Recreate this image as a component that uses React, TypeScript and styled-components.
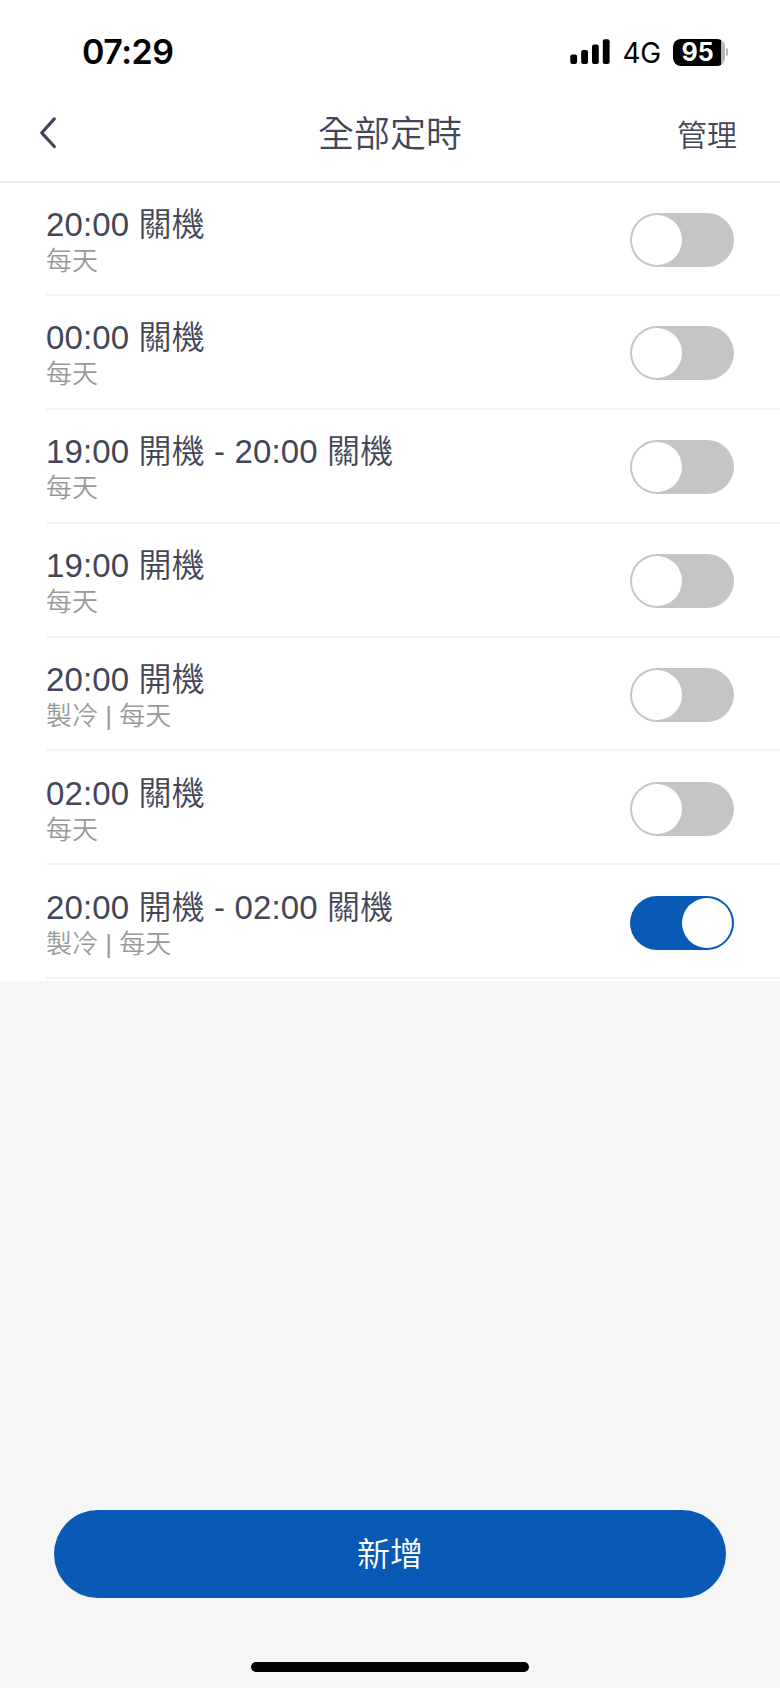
import React, { useState } from "react";
import styled, { createGlobalStyle } from "styled-components";

const Global = createGlobalStyle`
  * { box-sizing: border-box; }
  body { margin: 0; background: #f6f6f6; }
  button { border: 0; padding: 0; background: none; font: inherit; color: inherit; }
`;

const Screen = styled.div`
  display: flex;
  flex-direction: column;
  width: 780px;
  height: 1688px;
  background: #f6f6f6;
  color: #434658;
  font-family: "Liberation Sans", "Noto Sans CJK TC", sans-serif;
  font-weight: 350;
`;

const StatusBar = styled.div`
  display: flex;
  justify-content: space-between;
  align-items: center;
  height: 104px;
  padding: 0 52px 0 82px;
  background: #fff;
  color: #000;
  font-family: Inter, sans-serif;
`;

const Clock = styled.span`
  font-size: 34px;
  font-weight: 600;
  line-height: 40px;
  letter-spacing: -0.5px;
`;

const StatusIcons = styled.div`
  display: flex;
  align-items: center;
`;

const Network = styled.span`
  margin: 2px 12px 0 12px;
  font-size: 28px;
  font-weight: 400;
  line-height: 32px;
  letter-spacing: -0.2px;
`;

const Battery = styled.div`
  display: flex;
  align-items: center;
`;

const BatteryBody = styled.div`
  display: flex;
  align-items: center;
  justify-content: center;
  width: 52px;
  height: 27px;
  padding-right: 3px;
  border-radius: 8px;
  background: linear-gradient(to right, #000 48.5px, #b5b5b5 48.5px);
  color: #fff;
  font-size: 25px;
  font-weight: 700;
  line-height: 27px;
`;

const BatteryTip = styled.div`
  width: 2px;
  height: 8px;
  margin-left: 1px;
  border-radius: 0 2px 2px 0;
  background: #b5b5b5;
`;

const NavBar = styled.header`
  display: grid;
  grid-template-columns: 1fr auto 1fr;
  align-items: center;
  height: 79px;
  padding: 0 43px 17px 40px;
  border-bottom: 2px solid #e9e9e9;
  background: #fff;
`;

const BackButton = styled.button`
  display: flex;
  justify-self: start;
  padding-bottom: 2px;
`;

const Title = styled.h1`
  margin: 0;
  padding: 2px 0 0 3px;
  font-size: 36px;
  font-weight: 350;
  line-height: 44px;
`;

const ManageButton = styled.button`
  justify-self: end;
  padding-top: 4px;
  font-size: 30px;
  line-height: 40px;
`;

const List = styled.ul`
  margin: 0;
  padding: 0 0 1.7px 46px;
  list-style: none;
  background: #fff;
`;

const Row = styled.li`
  display: flex;
  justify-content: space-between;
  align-items: center;
  height: 113.9px;
  padding-top: 3px;
  padding-right: 46px;
  border-bottom: 2px solid #f3f3f3;

  &:first-child {
    height: 112.9px;
  }
`;

const RowText = styled.div`
  display: flex;
  flex-direction: column;
  padding-top: 2px;
`;

const Schedule = styled.span`
  font-size: 33px;
  line-height: 40px;
  letter-spacing: 0.13px;
`;

const Detail = styled.span`
  color: #999;
  font-size: 26px;
  line-height: 32px;
`;

const Switch = styled.button<{ $on: boolean }>`
  display: flex;
  justify-content: ${(p) => (p.$on ? "flex-end" : "flex-start")};
  width: 104px;
  height: 54px;
  padding: 2px;
  border-radius: 27px;
  background: ${(p) => (p.$on ? "#095ab5" : "#c5c5c5")};
`;

const Knob = styled.span`
  width: 50px;
  height: 50px;
  border-radius: 50%;
  background: #fff;
`;

const Footer = styled.footer`
  display: flex;
  flex-direction: column;
  align-items: center;
  margin-top: auto;
  padding: 0 54px 16px;
`;

const AddButton = styled.button`
  width: 100%;
  height: 88px;
  padding-top: 2px;
  border-radius: 44px;
  background: #095ab5;
  color: #fff;
  font-size: 33px;
  line-height: 44px;
`;

const HomeIndicator = styled.div`
  width: 278px;
  height: 10px;
  margin-top: 64px;
  border-radius: 5px;
  background: #000;
`;

const initialTimers = [
  { schedule: "20:00 關機", detail: "每天", on: false },
  { schedule: "00:00 關機", detail: "每天", on: false },
  { schedule: "19:00 開機 - 20:00 關機", detail: "每天", on: false },
  { schedule: "19:00 開機", detail: "每天", on: false },
  { schedule: "20:00 開機", detail: "製冷 | 每天", on: false },
  { schedule: "02:00 關機", detail: "每天", on: false },
  { schedule: "20:00 開機 - 02:00 關機", detail: "製冷 | 每天", on: true },
];

const SignalIcon = () => (
  <svg width="40" height="26" viewBox="0 0 40 26">
    <rect x="0.3" y="15.5" width="6.8" height="9.5" rx="2" />
    <rect x="11.2" y="11" width="6.8" height="14" rx="2" />
    <rect x="22" y="5.5" width="6.8" height="19.5" rx="2" />
    <rect x="32.8" y="0.3" width="6.8" height="24.7" rx="2" />
  </svg>
);

const BackIcon = () => (
  <svg width="18" height="32" viewBox="0 0 18 32" fill="none" stroke="#434658" strokeWidth="3.2" strokeLinecap="round" strokeLinejoin="round">
    <path d="M14.3 1.9 1.8 15.8 14.3 29.5" />
  </svg>
);

export default function App() {
  const [timers, setTimers] = useState(initialTimers);
  const toggle = (index: number) =>
    setTimers((all) => all.map((t, i) => (i === index ? { ...t, on: !t.on } : t)));

  return (
    <>
      <Global />
      <Screen lang="zh-Hant">
        <StatusBar>
          <Clock>07:29</Clock>
          <StatusIcons>
            <SignalIcon />
            <Network>4G</Network>
            <Battery>
              <BatteryBody>95</BatteryBody>
              <BatteryTip />
            </Battery>
          </StatusIcons>
        </StatusBar>
        <NavBar>
          <BackButton aria-label="返回">
            <BackIcon />
          </BackButton>
          <Title>全部定時</Title>
          <ManageButton>管理</ManageButton>
        </NavBar>
        <List>
          {timers.map((timer, i) => (
            <Row key={i}>
              <RowText>
                <Schedule>{timer.schedule}</Schedule>
                <Detail>{timer.detail}</Detail>
              </RowText>
              <Switch $on={timer.on} role="switch" aria-checked={timer.on} onClick={() => toggle(i)}>
                <Knob />
              </Switch>
            </Row>
          ))}
        </List>
        <Footer>
          <AddButton>新增</AddButton>
          <HomeIndicator />
        </Footer>
      </Screen>
    </>
  );
}
